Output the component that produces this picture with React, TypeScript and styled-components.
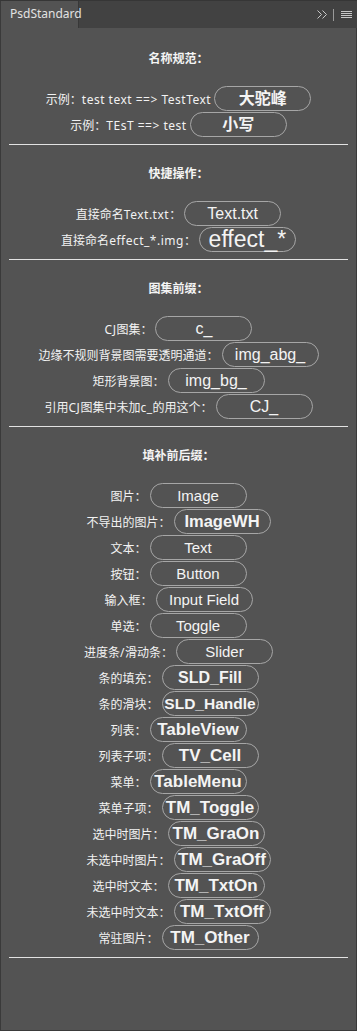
import styled, { createGlobalStyle } from "styled-components";

interface RowData {
  label: string;
  value: string;
  size?: number;
  bold?: boolean;
}

interface SectionData {
  title: string;
  rows: RowData[];
}

const sections: SectionData[] = [
  {
    title: "名称规范：",
    rows: [
      { label: "示例：test text ==> TestText", value: "大驼峰", size: 16, bold: true },
      { label: "示例：TEsT ==> test", value: "小写", size: 16, bold: true },
    ],
  },
  {
    title: "快捷操作：",
    rows: [
      { label: "直接命名Text.txt：", value: "Text.txt", size: 16 },
      { label: "直接命名effect_*.img：", value: "effect_*", size: 23 },
    ],
  },
  {
    title: "图集前缀：",
    rows: [
      { label: "CJ图集：", value: "c_", size: 16 },
      { label: "边缘不规则背景图需要透明通道：", value: "img_abg_", size: 16 },
      { label: "矩形背景图：", value: "img_bg_", size: 16 },
      { label: "引用CJ图集中未加c_的用这个：", value: "CJ_", size: 16 },
    ],
  },
  {
    title: "填补前后缀：",
    rows: [
      { label: "图片：", value: "Image", size: 15 },
      { label: "不导出的图片：", value: "ImageWH", size: 16.5, bold: true },
      { label: "文本：", value: "Text", size: 15 },
      { label: "按钮：", value: "Button", size: 15 },
      { label: "输入框：", value: "Input Field", size: 15 },
      { label: "单选：", value: "Toggle", size: 15 },
      { label: "进度条/滑动条：", value: "Slider", size: 15 },
      { label: "条的填充：", value: "SLD_Fill", size: 16, bold: true },
      { label: "条的滑块：", value: "SLD_Handle", size: 15.5, bold: true },
      { label: "列表：", value: "TableView", size: 17, bold: true },
      { label: "列表子项：", value: "TV_Cell", size: 17, bold: true },
      { label: "菜单：", value: "TableMenu", size: 17, bold: true },
      { label: "菜单子项：", value: "TM_Toggle", size: 17, bold: true },
      { label: "选中时图片：", value: "TM_GraOn", size: 17, bold: true },
      { label: "未选中时图片：", value: "TM_GraOff", size: 17, bold: true },
      { label: "选中时文本：", value: "TM_TxtOn", size: 17, bold: true },
      { label: "未选中时文本：", value: "TM_TxtOff", size: 17, bold: true },
      { label: "常驻图片：", value: "TM_Other", size: 17, bold: true },
    ],
  },
];

// latin runs in the labels are set a little wider than the cjk ones
const renderLabel = (text: string) =>
  text
    .split(/([\x20-\x7e]+)/)
    .filter((part) => part !== "")
    .map((part, i) =>
      /^[\x20-\x7e]+$/.test(part) ? <Latin key={i}>{part}</Latin> : <span key={i}>{part}</span>
    );

function App() {
  return (
    <>
      <GlobalStyle />
      <PanelStyle>
        <TabBar>
          <Tab>PsdStandard</Tab>
          <TabIcons>
            <svg width="10" height="9" viewBox="0 0 10 9">
              <polyline points="0.5,0.5 4.5,4.5 0.5,8.5" fill="none" stroke="#c8c8c8" strokeWidth="1" />
              <polyline points="5.5,0.5 9.5,4.5 5.5,8.5" fill="none" stroke="#c8c8c8" strokeWidth="1" />
            </svg>
            <Divider />
            <svg width="11" height="8" viewBox="0 0 11 8">
              <rect x="0" y="0" width="11" height="1" fill="#c8c8c8" />
              <rect x="0" y="2" width="11" height="1" fill="#c8c8c8" />
              <rect x="0" y="4" width="11" height="1" fill="#c8c8c8" />
              <rect x="0" y="6" width="11" height="1" fill="#c8c8c8" />
            </svg>
          </TabIcons>
        </TabBar>
        <Content>
          {sections.map((section, i) => (
            <Section key={section.title} first={i === 0}>
              <Title>{section.title}</Title>
              <Rows>
                {section.rows.map((row) => (
                  <Row key={row.value}>
                    <Label>{renderLabel(row.label)}</Label>
                    <Pill size={row.size ?? 15} bold={row.bold}>
                      {row.value}
                    </Pill>
                  </Row>
                ))}
              </Rows>
            </Section>
          ))}
        </Content>
      </PanelStyle>
    </>
  );
}

const GlobalStyle = createGlobalStyle`
  html, body {
    margin: 0;
    padding: 0;
    background: #535353;
  }
  body {
    font-family: "Noto Sans", "Noto Sans CJK SC", sans-serif;
  }
`;

const PanelStyle = styled.div`
  width: 357px;
  height: 1031px;
  box-sizing: border-box;
  background: #535353;
  border-left: 1px solid #3a3a3a;
  border-right: 1px solid #3a3a3a;
  border-bottom: 1px solid #3a3a3a;
  display: flex;
  flex-direction: column;
`;

const TabBar = styled.div`
  height: 28px;
  box-sizing: border-box;
  display: flex;
  background: #424242;
  border-top: 1px solid #363636;
  margin: 0 -1px;
`;

const Tab = styled.div`
  width: 79px;
  box-sizing: border-box;
  padding-left: 9px;
  background: #535353;
  border-right: 1px solid #383838;
  border-left: 1px solid #3a3a3a;
  color: #e2e2e2;
  font-size: 12px;
  line-height: 26px;
`;

const TabIcons = styled.div`
  margin-left: auto;
  display: flex;
  align-items: center;
  padding-right: 5px;
  gap: 6px;
  svg:last-child {
    margin-left: 1px;
  }
`;

const Divider = styled.div`
  width: 1px;
  height: 12px;
  background: #9a9a9a;
`;

const Content = styled.div`
  padding: 0 8px;
`;

const Section = styled.div<{ first?: boolean }>`
  padding: ${(props) => (props.first ? "21px" : "19px")} 0 7px;
  border-bottom: 1px solid #e2e2e2;
`;

const Title = styled.div`
  text-align: center;
  font-size: 12px;
  font-weight: 700;
  line-height: 20px;
  color: #f4f4f4;
  margin-bottom: 17px;
`;

const Rows = styled.div`
  display: flex;
  flex-direction: column;
  gap: 1px;
`;

const Row = styled.div`
  display: flex;
  align-items: center;
  justify-content: center;
  height: 25px;
  gap: 3px;
`;

const Label = styled.span`
  font-size: 12px;
  color: #f2f2f2;
  white-space: nowrap;
`;

const Latin = styled.span`
  letter-spacing: 0.5px;
`;

const Pill = styled.div<{ size: number; bold?: boolean }>`
  width: 97px;
  height: 25px;
  flex-shrink: 0;
  box-sizing: border-box;
  border: 1px solid #a6a6a6;
  border-radius: 12.5px;
  display: flex;
  align-items: center;
  justify-content: center;
  font-family: "Liberation Sans", "Noto Sans CJK SC", sans-serif;
  font-size: ${(props) => props.size}px;
  font-weight: ${(props) => (props.bold ? 700 : 400)};
  color: #f4f4f4;
  white-space: nowrap;
  line-height: 1;
`;

export default App;
